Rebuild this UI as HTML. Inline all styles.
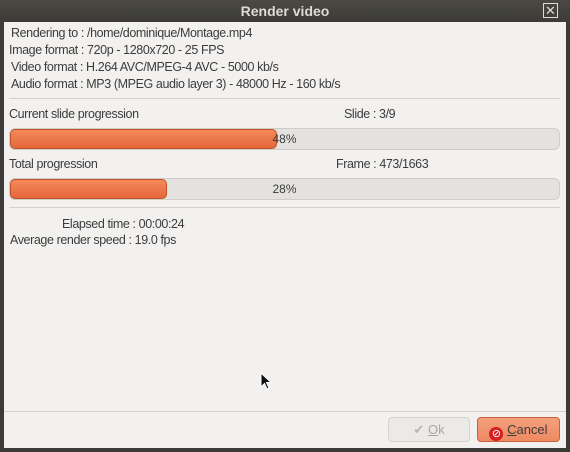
<!DOCTYPE html>
<html><head><style>
body{margin:0;width:570px;height:452px;background:#3c3b37;font-family:"Liberation Sans",sans-serif;font-size:12px;color:#3c3c3c;position:relative;overflow:hidden}
.t{position:absolute;left:0;top:0;width:570px;height:22px;background:linear-gradient(#4a4944,#3c3b37);color:#dfdbd2;font-weight:bold;font-size:14px;text-align:center;line-height:23px}
.x{position:absolute;left:543px;top:3px;width:15px;height:15px;border:1px solid #dfdbd2;box-sizing:border-box;color:#dfdbd2;font-size:13px;line-height:13px;text-align:center;font-weight:normal}
.c{position:absolute;left:4px;top:22px;width:562px;height:426px;background:#f2f1f0}
.a{position:absolute;white-space:nowrap;font-size:12.5px;letter-spacing:-0.4px}
.sep{position:absolute;left:9px;width:551px;height:1px;background:#d3d0cb}
.bar{position:absolute;left:9px;width:551px;height:22px;border:1px solid #d0cdc8;box-sizing:border-box;border-radius:6px;background:#e4e2df}
.f{position:absolute;left:0;top:0;height:20px;border:1px solid #c0522a;box-sizing:border-box;border-radius:5px;background:linear-gradient(#f48a5a,#e5663a)}
.p{position:absolute;left:0;width:100%;text-align:center;top:3px}
.b{position:absolute;top:417px;height:25px;border-radius:4px;box-sizing:border-box;text-align:center;line-height:23px;font-size:13px}
</style></head><body>
<div class="t">Render video</div><div class="x">✕</div>
<div class="c"></div>
<div class="a" style="left:11px;top:26px">Rendering to : /home/dominique/Montage.mp4</div>
<div class="a" style="left:9px;top:43px">Image format : 720p - 1280x720 - 25 FPS</div>
<div class="a" style="left:11px;top:60px">Video format : H.264 AVC/MPEG-4 AVC - 5000 kb/s</div>
<div class="a" style="left:11px;top:77px">Audio format : MP3 (MPEG audio layer 3) - 48000 Hz - 160 kb/s</div>
<div class="sep" style="top:98px"></div>
<div class="a" style="left:9px;top:107px">Current slide progression</div>
<div class="a" style="left:344px;top:107px">Slide : 3/9</div>
<div class="bar" style="top:128px"><div class="f" style="width:267px"></div><div class="p">48%</div></div>
<div class="a" style="left:9px;top:157px">Total progression</div>
<div class="a" style="left:336px;top:157px">Frame : 473/1663</div>
<div class="bar" style="top:178px"><div class="f" style="width:157px"></div><div class="p">28%</div></div>
<div class="sep" style="top:207px"></div>
<div class="a" style="left:62px;top:217px">Elapsed time : 00:00:24</div>
<div class="a" style="left:10px;top:233px">Average render speed : 19.0 fps</div>
<svg style="position:absolute;left:260px;top:372px" width="12" height="19"><path d="M1 1 L1 15 L4.5 11.5 L7 17 L9 16 L6.5 10.5 L11 10.5 Z" fill="#111" stroke="#fff" stroke-width="1"/></svg>
<div class="sep" style="top:411px;left:4px;width:562px"></div>
<div class="b" style="left:388px;width:82px;border:1px solid #d6d4d0;background:#ebeae8;color:#aaa8a4"><span style="color:#b8b6b2">✔</span> <u>O</u>k</div>
<div class="b" style="left:477px;width:83px;border:1px solid #c8603a;background:linear-gradient(#f4a07c,#ee8a62);color:#3c3c3c"><span style="display:inline-block;width:14px;height:14px;border-radius:50%;background:#d42020;vertical-align:-3px;color:#fff;font-size:11px;line-height:14px">⊘</span> <u>C</u>ancel</div>
</body></html>
